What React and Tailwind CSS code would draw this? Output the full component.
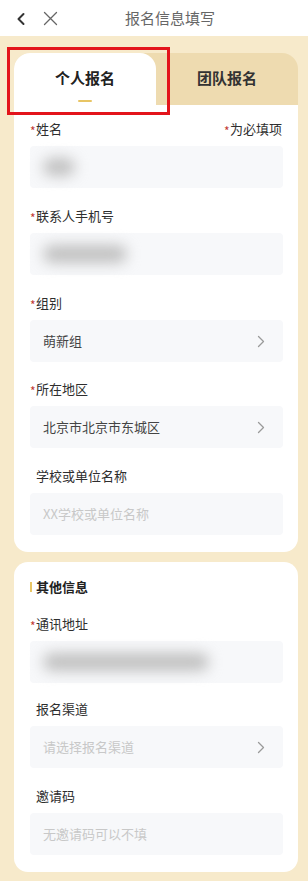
import React from "react";

const Star = () => (
  <span className="text-[#c23a33] text-[12px] leading-none w-[6px] inline-block translate-y-[2px]">*</span>
);

const Chevron = () => (
  <svg width="8" height="13" viewBox="0 0 8 13" fill="none">
    <path d="M1.5 1.5 L6.5 6.5 L1.5 11.5" stroke="#9a9a9a" strokeWidth="1.3" strokeLinecap="round" strokeLinejoin="round" />
  </svg>
);

function Label({ required, children, right }) {
  return (
    <div className={`flex items-center h-[20px] text-[13px] text-[#2e2e2e] ${required ? "" : "pl-[6px]"}`}>
      {required && <Star />}
      <span>{children}</span>
      {right && (
        <span className="ml-auto flex items-center pr-[1px]">
          <Star />
          <span>{right}</span>
        </span>
      )}
    </div>
  );
}

function Field({ children, arrow }) {
  return (
    <div className="mt-[7px] h-[42px] bg-[#f7f8fa] rounded-[4px] flex items-center pl-[13px] pr-[18px] text-[13px]">
      <div className="flex-1 flex items-center">{children}</div>
      {arrow && <Chevron />}
    </div>
  );
}

function Blur({ w }) {
  return <div className={`h-[18px] ${w} bg-[#c0c0c0] rounded-full blur-[7px]`} />;
}

export default function App() {
  return (
    <div className="w-[308px] min-h-[881px] bg-[#f7eacb] font-['Noto_Sans_CJK_SC',sans-serif] pb-[11px]">
      {/* header */}
      <div className="h-[36px] bg-white flex items-center relative">
        <div className="absolute left-[15px] top-[12px]">
          <svg width="12" height="14" viewBox="0 0 12 14" fill="none">
            <path d="M8.5 2 L3.5 7 L8.5 12" stroke="#333" strokeWidth="2" strokeLinecap="round" strokeLinejoin="round" />
          </svg>
        </div>
        <div className="absolute left-[43px] top-[11px]">
          <svg width="15" height="15" viewBox="0 0 15 15" fill="none">
            <path d="M1.5 1.5 L13.5 13.5 M13.5 1.5 L1.5 13.5" stroke="#666" strokeWidth="1.3" strokeLinecap="round" />
          </svg>
        </div>
        <div className="flex-1 text-center pl-[32px] text-[15px] text-[#666]">报名信息填写</div>
      </div>

      <div className="pl-[14px] pr-[10px] pt-[17px]">
        {/* tabs */}
        <div className="relative">
          <div className="flex h-[52px] bg-[#eedbb0] rounded-t-[16px]">
            <div className="w-[142px] bg-white rounded-t-[16px] flex flex-col items-center pt-[14px]">
              <span className="text-[15px] font-bold text-[#222] leading-[22px]">个人报名</span>
              <span className="mt-[11px] w-[14px] h-[2px] bg-[#e8c564] rounded" />
            </div>
            <div className="flex-1 flex justify-center pt-[14px]">
              <span className="text-[15px] font-bold text-[#333] leading-[22px]">团队报名</span>
            </div>
          </div>
          <div className="absolute left-[-7px] top-[-6px] w-[163px] h-[68px] border-[3px] border-[#e3141b]" />
        </div>

        {/* card 1 */}
        <div className="bg-white rounded-b-[14px] pl-[16px] pr-[15px] pt-[14px] pb-[17px]">
          <Label required right="为必填项">姓名</Label>
          <Field>
            <Blur w="w-[32px]" />
          </Field>
          <div className="mt-[18px]">
            <Label required>联系人手机号</Label>
            <Field>
              <Blur w="w-[84px]" />
            </Field>
          </div>
          <div className="mt-[18px]">
            <Label required>组别</Label>
            <Field arrow>
              <span className="text-[#444]">萌新组</span>
            </Field>
          </div>
          <div className="mt-[17px]">
            <Label required>所在地区</Label>
            <Field arrow>
              <span className="text-[#444]">北京市北京市东城区</span>
            </Field>
          </div>
          <div className="mt-[18px]">
            <Label>学校或单位名称</Label>
            <Field>
              <span className="text-[#c8c8c8]">XX学校或单位名称</span>
            </Field>
          </div>
        </div>

        {/* card 2 */}
        <div className="mt-[10px] bg-white rounded-[14px] pl-[16px] pr-[15px] pt-[15px] pb-[17px]">
          <div className="flex items-center h-[20px] text-[13px] font-bold text-[#222]">
            <span className="w-[2px] h-[10px] bg-[#e8c564] mr-[4px]" />
            <span>其他信息</span>
          </div>
          <div className="mt-[17px]">
            <Label required>通讯地址</Label>
            <Field>
              <Blur w="w-[166px]" />
            </Field>
          </div>
          <div className="mt-[16px]">
            <Label>报名渠道</Label>
            <Field arrow>
              <span className="text-[#c8c8c8]">请选择报名渠道</span>
            </Field>
          </div>
          <div className="mt-[18px]">
            <Label>邀请码</Label>
            <Field>
              <span className="text-[#c8c8c8]">无邀请码可以不填</span>
            </Field>
          </div>
        </div>
      </div>
    </div>
  );
}
